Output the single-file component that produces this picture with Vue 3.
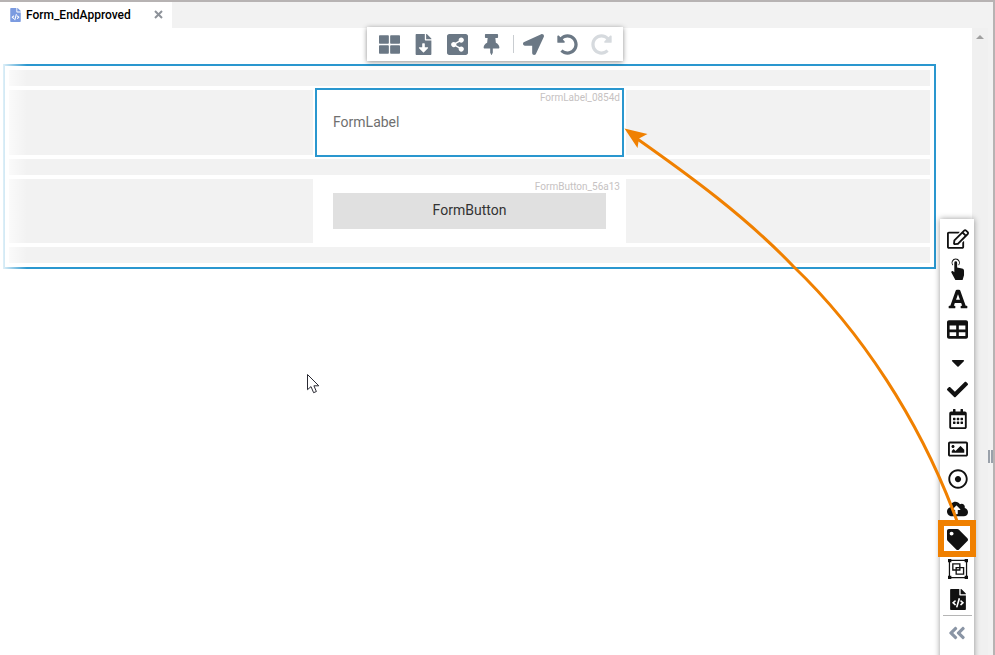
<script setup>
const toolbarIcons = [
  { id: 'layout', vb: '0 0 512 512', d: 'M296 32h192c13.255 0 24 10.745 24 24v160c0 13.255-10.745 24-24 24H296c-13.255 0-24-10.745-24-24V56c0-13.255 10.745-24 24-24zm-80 0H24C10.745 32 0 42.745 0 56v160c0 13.255 10.745 24 24 24h192c13.255 0 24-10.745 24-24V56c0-13.255-10.745-24-24-24zM0 296v160c0 13.255 10.745 24 24 24h192c13.255 0 24-10.745 24-24V296c0-13.255-10.745-24-24-24H24c-13.255 0-24 10.745-24 24zm296 184h192c13.255 0 24-10.745 24-24V296c0-13.255-10.745-24-24-24H296c-13.255 0-24 10.745-24 24v160c0 13.255 10.745 24 24 24z' },
  { id: 'download', vb: '0 0 384 512', d: 'M224 136V0H24C10.7 0 0 10.7 0 24v464c0 13.3 10.7 24 24 24h336c13.3 0 24-10.7 24-24V160H248c-13.2 0-24-10.8-24-24zm76.45 211.36l-96.42 95.7c-6.65 6.61-17.39 6.61-24.04 0l-96.42-95.7C73.42 337.29 80.54 320 94.82 320H160v-80c0-8.84 7.16-16 16-16h32c8.84 0 16 7.16 16 16v80h65.18c14.28 0 21.4 17.29 11.27 27.36zM377 105L279.1 7c-4.5-4.5-10.6-7-17-7H256v128h128v-6.1c0-6.3-2.5-12.4-7-16.9z' },
  { id: 'share', vb: '0 32 448 448', d: 'M448 80v352c0 26.51-21.49 48-48 48H48c-26.51 0-48-21.49-48-48V80c0-26.51 21.49-48 48-48h352c26.51 0 48 21.49 48 48zM304 296c-14.562 0-27.823 5.561-37.783 14.671l-67.958-40.775a56.339 56.339 0 0 0 0-27.793l67.958-40.775C276.177 210.439 289.438 216 304 216c30.928 0 56-25.072 56-56s-25.072-56-56-56-56 25.072-56 56c0 4.797.605 9.453 1.74 13.897l-67.958 40.775C171.823 205.561 158.562 200 144 200c-30.928 0-56 25.072-56 56s25.072 56 56 56c14.562 0 27.823-5.561 37.783-14.671l67.958 40.775a56.088 56.088 0 0 0-1.74 13.897c0 30.928 25.072 56 56 56s56-25.072 56-56C360 321.072 334.928 296 304 296z' },
  { id: 'pin', vb: '0 0 384 512', d: 'M298.028 214.267L285.793 96H328c13.255 0 24-10.745 24-24V24c0-13.255-10.745-24-24-24H56C42.745 0 32 10.745 32 24v48c0 13.255 10.745 24 24 24h42.207L85.972 214.267C37.465 236.82 0 277.261 0 328c0 13.255 10.745 24 24 24h136v104.007c0 1.242.289 2.467.845 3.578l24 48c2.941 5.882 11.364 5.893 14.311 0l24-48a8.008 8.008 0 0 0 .845-3.578V352h136c13.255 0 24-10.745 24-24-.001-51.183-37.983-91.42-85.973-113.733z' },
  { id: 'sep' },
  { id: 'locate', narrow: true, vb: '0 0 512 512', d: 'M444.52 3.52L28.74 195.42c-47.97 22.39-31.98 92.75 19.19 92.75h175.91v175.91c0 51.17 70.36 67.17 92.75 19.19l191.9-415.78c15.99-38.39-25.59-79.97-63.97-63.97z' },
  { id: 'undo', vb: '0 0 512 512', d: 'M255.545 8c-66.269.119-126.438 26.233-170.86 68.685L48.971 40.971C33.851 25.851 8 36.559 8 57.941V192c0 13.255 10.745 24 24 24h134.059c21.382 0 32.09-25.851 16.971-40.971l-41.75-41.75c30.864-28.899 70.801-44.907 113.23-45.273 92.398-.798 170.283 73.977 169.484 169.442C423.236 348.009 349.816 424 256 424c-41.127 0-79.997-14.678-110.63-41.556-4.743-4.161-11.906-3.908-16.368.553L89.34 422.659c-4.872 4.872-4.631 12.815.482 17.433C133.798 479.813 192.074 504 256 504c136.966 0 247.999-111.033 248-247.998C504.001 119.193 392.354 7.755 255.545 8z' },
  { id: 'redo', off: true, vb: '0 0 512 512', d: 'M256.455 8c66.269.119 126.437 26.233 170.859 68.685l35.715-35.715C478.149 25.851 504 36.559 504 57.941V192c0 13.255-10.745 24-24 24H345.941c-21.382 0-32.09-25.851-16.971-40.971l41.75-41.75c-30.864-28.899-70.801-44.907-113.23-45.273-92.398-.798-170.283 73.977-169.484 169.442C88.764 348.009 162.184 424 256 424c41.127 0 79.997-14.678 110.63-41.556 4.743-4.161 11.906-3.908 16.368.553l39.662 39.662c4.872 4.872 4.631 12.815-.482 17.433C378.202 479.813 319.926 504 256 504 119.034 504 8.001 392.967 8 256.002 7.999 119.193 119.646 7.755 256.455 8z' }
]

const fileCode = 'M384 121.941V128H256V0h6.059c6.365 0 12.47 2.529 16.971 7.029l97.941 97.941A24.005 24.005 0 0 1 384 121.941zM248 160c-13.2 0-24-10.8-24-24V0H24C10.745 0 0 10.745 0 24v464c0 13.255 10.745 24 24 24h336c13.255 0 24-10.745 24-24V160H248zM123.206 400.505a5.4 5.4 0 0 1-7.633.246l-64.866-60.812a5.4 5.4 0 0 1 0-7.879l64.866-60.812a5.4 5.4 0 0 1 7.633.246l19.579 20.885a5.4 5.4 0 0 1-.372 7.747L101.65 336l40.763 35.874a5.4 5.4 0 0 1 .372 7.747l-19.579 20.884zm51.295 50.479l-27.453-7.97a5.402 5.402 0 0 1-3.681-6.692l61.44-211.626a5.402 5.402 0 0 1 6.692-3.681l27.452 7.97a5.4 5.4 0 0 1 3.68 6.692l-61.44 211.626a5.397 5.397 0 0 1-6.69 3.681zm160.792-111.045l-64.866 60.812a5.4 5.4 0 0 1-7.633-.246l-19.58-20.885a5.4 5.4 0 0 1 .372-7.747L284.35 336l-40.763-35.874a5.4 5.4 0 0 1-.372-7.747l19.58-20.885a5.4 5.4 0 0 1 7.633-.246l64.866 60.812a5.4 5.4 0 0 1-.001 7.879z'

const paletteIcons = [
  { id: 'edit', w: 22, h: 20, vb: '0 0 576 512', d: 'M402.3 344.9l32-32c5-5 13.7-1.5 13.7 5.7V464c0 26.5-21.5 48-48 48H48c-26.5 0-48-21.5-48-48V112c0-26.5 21.5-48 48-48h273.5c7.1 0 10.7 8.6 5.7 13.7l-32 32c-1.5 1.5-3.5 2.3-5.7 2.3H48v352h352V350.5c0-2.1.8-4.1 2.3-5.6zm156.6-201.8L296.3 405.7l-90.4 10c-26.2 2.9-48.5-19.2-45.6-45.6l10-90.4L432.9 17.1c22.9-22.9 59.9-22.9 82.7 0l43.2 43.2c22.9 22.9 22.9 60 .1 82.8zM460.1 174L402 115.9 216.2 301.8l-7.3 65.3 65.3-7.3L460.1 174zm64.8-79.7l-43.2-43.2c-4.1-4.1-10.8-4.1-14.8 0L436 82l58.1 58.1 30.9-30.9c4-4.2 4-10.8-.1-14.9z' },
  { id: 'tap', w: 17, h: 23, vb: '0 0 24 32', d: 'M9.5 0.5a6 6 0 0 1 4.6 9.8l-1-1.1a4.5 4.5 0 1 0-7.2 0l-1 1.1A6 6 0 0 1 9.5 0.5zM7.5 6.5a2 2 0 0 1 4 0v6.5l6.8 1.5c2 .4 2.9 1.5 2.9 3.2V24l-2 7H9L3.5 20.5c-1-1.5.8-3.3 2.3-2.1l1.7 1.4z' },
  { id: 'font', w: 20, h: 20, vb: '0 16 448 480', d: 'M432 416h-23.41L277.88 53.69A32 32 0 0 0 247.58 32h-47.16a32 32 0 0 0-30.3 21.69L39.41 416H16a16 16 0 0 0-16 16v32a16 16 0 0 0 16 16h128a16 16 0 0 0 16-16v-32a16 16 0 0 0-16-16h-19.6l23.3-64h152.6l23.3 64H304a16 16 0 0 0-16 16v32a16 16 0 0 0 16 16h128a16 16 0 0 0 16-16v-32a16 16 0 0 0-16-16zM176.85 272L224 142.51 271.15 272z' },
  { id: 'table', w: 21, h: 21, vb: '0 0 512 512', d: 'M464 32H48C21.49 32 0 53.49 0 80v352c0 26.51 21.49 48 48 48h416c26.51 0 48-21.49 48-48V80c0-26.51-21.49-48-48-48zM224 416H64v-96h160v96zm0-160H64v-96h160v96zm224 160H288v-96h160v96zm0-160H288v-96h160v96z' },
  { id: 'caret', low: true, w: 14, h: 21, vb: '0 0 320 512', d: 'M31.3 192h257.3c17.8 0 26.7 21.5 14.1 34.1L174.1 354.8c-7.8 7.8-20.5 7.8-28.3 0L17.2 226.1C4.6 213.5 13.5 192 31.3 192z' },
  { id: 'check', w: 21, h: 21, vb: '0 0 512 512', d: 'M173.898 439.404l-166.4-166.4c-9.997-9.997-9.997-26.206 0-36.204l36.203-36.204c9.997-9.998 26.207-9.998 36.204 0L192 312.69 432.095 72.596c9.997-9.997 26.207-9.997 36.204 0l36.203 36.204c9.997 9.997 9.997 26.206 0 36.204l-294.4 294.401c-9.998 9.997-26.207 9.997-36.204-.001z' },
  { id: 'calendar', w: 18, h: 20, vb: '0 0 448 512', d: 'M148 288h-40c-6.6 0-12-5.4-12-12v-40c0-6.6 5.4-12 12-12h40c6.6 0 12 5.4 12 12v40c0 6.6-5.4 12-12 12zm108-12v-40c0-6.6-5.4-12-12-12h-40c-6.6 0-12 5.4-12 12v40c0 6.6 5.4 12 12 12h40c6.6 0 12-5.4 12-12zm96 0v-40c0-6.6-5.4-12-12-12h-40c-6.6 0-12 5.4-12 12v40c0 6.6 5.4 12 12 12h40c6.6 0 12-5.4 12-12zm-96 96v-40c0-6.6-5.4-12-12-12h-40c-6.6 0-12 5.4-12 12v40c0 6.6 5.4 12 12 12h40c6.6 0 12-5.4 12-12zm-96 0v-40c0-6.6-5.4-12-12-12h-40c-6.6 0-12 5.4-12 12v40c0 6.6 5.4 12 12 12h40c6.6 0 12-5.4 12-12zm192 0v-40c0-6.6-5.4-12-12-12h-40c-6.6 0-12 5.4-12 12v40c0 6.6 5.4 12 12 12h40c6.6 0 12-5.4 12-12zm96-260v352c0 26.5-21.5 48-48 48H48c-26.5 0-48-21.5-48-48V112c0-26.5 21.5-48 48-48h48V12c0-6.6 5.4-12 12-12h40c6.6 0 12 5.4 12 12v52h128V12c0-6.6 5.4-12 12-12h40c6.6 0 12 5.4 12 12v52h48c26.5 0 48 21.5 48 48zm-48 346V160H48v298c0 3.3 2.7 6 6 6h340c3.3 0 6-2.7 6-6z' },
  { id: 'image', w: 20, h: 20, vb: '0 0 512 512', d: 'M464 64H48C21.49 64 0 85.49 0 112v288c0 26.51 21.49 48 48 48h416c26.51 0 48-21.49 48-48V112c0-26.51-21.49-48-48-48zm-6 336H54a6 6 0 0 1-6-6V118a6 6 0 0 1 6-6h404a6 6 0 0 1 6 6v276a6 6 0 0 1-6 6zM128 152c-22.091 0-40 17.909-40 40s17.909 40 40 40 40-17.909 40-40-17.909-40-40-40zM96 352h320v-80l-87.515-87.515c-4.686-4.686-12.284-4.686-16.971 0L192 304l-39.515-39.515c-4.686-4.686-12.284-4.686-16.971 0L96 304v48z' },
  { id: 'radio', w: 20, h: 20, vb: '0 0 512 512', d: 'M256 56c110.532 0 200 89.451 200 200 0 110.532-89.451 200-200 200-110.532 0-200-89.451-200-200 0-110.532 89.451-200 200-200m0-48C119.033 8 8 119.033 8 256s111.033 248 248 248 248-111.033 248-248S392.967 8 256 8zm0 168c-44.183 0-80 35.817-80 80s35.817 80 80 80 80-35.817 80-80-35.817-80-80-80z' },
  { id: 'cloud', w: 21, h: 20, vb: '0 0 640 512', d: 'M537.6 226.6c4.1-10.7 6.4-22.4 6.4-34.6 0-53-43-96-96-96-19.7 0-38.1 6-53.3 16.2C367 64.2 315.3 32 256 32c-88.4 0-160 71.6-160 160 0 2.7.1 5.4.2 8.1C40.2 219.8 0 273.2 0 336c0 79.5 64.5 144 144 144h368c70.7 0 128-57.3 128-128 0-61.9-44-113.6-102.4-125.4zM393.4 288H328v112c0 8.8-7.2 16-16 16h-48c-8.8 0-16-7.2-16-16V288h-65.4c-14.3 0-21.4-17.2-11.3-27.3l105.4-105.4c6.2-6.2 16.4-6.2 22.6 0l105.4 105.4c10.1 10.1 3 27.3-11.3 27.3z' },
  { id: 'tag', marked: true, w: 21, h: 21, vb: '0 0 512 512', d: 'M0 252.118V48C0 21.49 21.49 0 48 0h204.118a48 48 0 0 1 33.941 14.059l211.882 211.882c18.745 18.745 18.745 49.137 0 67.882L293.823 497.941c-18.745 18.745-49.137 18.745-67.882 0L14.059 286.059A48 48 0 0 1 0 252.118zM112 64c-26.51 0-48 21.49-48 48s21.49 48 48 48 48-21.49 48-48-21.49-48-48-48z' },
  { id: 'frame', w: 20, h: 20, vb: '0 0 24 24', d: 'M0 0h4v1h16V0h4v4h-1v16h1v4h-4v-1H4v1H0v-4h1V4H0zM2.5 4v16H4v1.5h16V20h1.5V4H20V2.5H4V4zM5 5h10v9H5zM6.6 6.6v5.8h6.8V6.6zM9 9.5h10.5v9.5H9zM10.6 11.1v6.3h7.3v-6.3z' },
  { id: 'filecode', w: 16, h: 21, vb: '0 0 384 512', d: fileCode }
]

const chevrons = 'M223.7 239l136-136c9.4-9.4 24.6-9.4 33.9 0l22.6 22.6c9.4 9.4 9.4 24.6 0 33.9L319.9 256l96.4 96.4c9.4 9.4 9.4 24.6 0 33.9L393.7 409c-9.4 9.4-24.6 9.4-33.9 0l-136-136c-9.5-9.4-9.5-24.6-.1-34zm-192 34l136 136c9.4 9.4 24.6 9.4 33.9 0l22.6-22.6c9.4-9.4 9.4-24.6 0-33.9L127.9 256l96.4-96.4c9.4-9.4 9.4-24.6 0-33.9L201.7 103c-9.4-9.4-24.6-9.4-33.9 0l-136 136c-9.5 9.4-9.5 24.6-.1 34z'
</script>

<template>
  <div class="app">
    <header class="tabbar">
      <div class="tab">
        <svg class="tab-icon" viewBox="0 0 384 512"><path :d="fileCode" /></svg>
        <span class="tab-title">Form_EndApproved</span>
        <svg class="tab-close" viewBox="0 0 9 9" width="9" height="9"><path d="M1 1L8 8M8 1L1 8" /></svg>
      </div>
    </header>

    <div class="body">
      <main class="canvas">
        <section class="form">
          <div class="band"></div>
          <div class="row">
            <div class="filler"></div>
            <div class="cell selected">
              <span class="caption">FormLabel_0854d</span>
              <span class="label">FormLabel</span>
            </div>
            <div class="filler"></div>
          </div>
          <div class="band"></div>
          <div class="row">
            <div class="filler"></div>
            <div class="cell">
              <span class="caption">FormButton_56a13</span>
              <div class="button">FormButton</div>
            </div>
            <div class="filler"></div>
          </div>
          <div class="band"></div>
          <div class="fade"></div>
        </section>
      </main>
      <div class="scrollbar"><span class="scroll-up"></span></div>
      <div class="splitter"><span class="grip"></span></div>
    </div>

    <nav class="toolbar">
      <template v-for="icon in toolbarIcons" :key="icon.id">
        <span v-if="icon.id === 'sep'" class="tool-sep"></span>
        <span v-else class="tool" :class="{ narrow: icon.narrow, off: icon.off }">
          <svg :viewBox="icon.vb" class="tool-svg"><path :d="icon.d" /></svg>
        </span>
      </template>
    </nav>

    <aside class="palette">
      <div
        v-for="icon in paletteIcons"
        :key="icon.id"
        class="pal-row"
        :class="{ low: icon.low }"
      >
        <svg :viewBox="icon.vb" :width="icon.w" :height="icon.h"><path :d="icon.d" /></svg>
        <span v-if="icon.marked" class="mark"></span>
      </div>
      <div class="pal-sep"></div>
      <div class="pal-collapse">
        <svg viewBox="0 0 448 512" width="18" height="20"><path :d="chevrons" /></svg>
      </div>
    </aside>

    <svg class="callout" viewBox="0 0 995 655" width="995" height="655">
      <path class="callout-line" d="M957 521C920 420 860 330 793 266C745 216 690 176 636 138" />
      <path class="callout-head" d="M624.5 128.5L647.5 134L639 138.5L637.5 148Z" />
    </svg>

    <svg class="pointer" viewBox="0 0 13 20" width="13" height="20">
      <path d="M.5.5V15.7L4 12.6 6.6 18.7 9.4 17.5 6.9 11.8H11.8Z" />
    </svg>
  </div>
</template>

<style scoped>
.app {
  position: relative;
  width: 995px;
  height: 655px;
  display: flex;
  flex-direction: column;
  overflow: hidden;
  box-sizing: border-box;
  border-top: 2px solid #b7b3b3;
  border-right: 2px solid #b7b3b3;
  background: #f2f2f2;
  font-family: Roboto, "Liberation Sans", sans-serif;
}
.tabbar {
  height: 26px;
  flex: none;
  display: flex;
}
.tab {
  width: 172px;
  background: #fff;
  display: flex;
  align-items: center;
  padding-left: 10px;
  box-sizing: border-box;
}
.tab-icon {
  width: 11px;
  height: 14px;
  fill: #7b9be0;
  flex: none;
}
.tab-title {
  margin-left: 5px;
  font-size: 12px;
  font-weight: 500;
  color: #000;
  width: 128px;
}
.tab-close {
  flex: none;
  margin-top: -2px;
}
.tab-close path {
  fill: none;
  stroke: #8d9299;
  stroke-width: 2;
}
.body {
  flex: 1;
  display: flex;
  min-height: 0;
}
.canvas {
  width: 972px;
  flex: none;
  background: #fff;
  padding: 36px 0 0 3px;
  box-sizing: border-box;
}
.form {
  position: relative;
  width: 933px;
  height: 205px;
  box-sizing: border-box;
  border: 2px solid #2a97cf;
  padding: 4px;
  display: flex;
  flex-direction: column;
  gap: 4px;
  background: #fff;
}
.band {
  height: 16px;
  background: #f2f2f2;
  flex: none;
}
.row {
  height: 65px;
  flex: none;
  display: grid;
  grid-template-columns: 304px 1fr 304px;
}
.row:nth-child(4) {
  height: 64px;
}
.filler {
  background: #f2f2f2;
}
.cell {
  position: relative;
  background: #fff;
  display: flex;
  flex-direction: column;
}
.selected {
  margin: -2px 2px;
  border: 2px solid #2a97cf;
  justify-content: center;
  padding-left: 16px;
}
.caption {
  position: absolute;
  top: 1px;
  right: 6px;
  font-size: 10px;
  line-height: 14px;
  color: #c6c2c2;
}
.selected .caption {
  top: 1px;
  right: 2px;
}
.label {
  font-size: 14px;
  line-height: 16px;
  padding-bottom: 2px;
  color: #6f6f6f;
}
.button {
  margin: 14px 20px 0;
  height: 36px;
  padding-bottom: 2px;
  box-sizing: border-box;
  background: #e0e0e0;
  color: #333;
  font-size: 14px;
  display: flex;
  align-items: center;
  justify-content: center;
}
.fade {
  position: absolute;
  left: -2px;
  top: -2px;
  bottom: -2px;
  width: 24px;
  background: linear-gradient(to right, rgba(255, 255, 255, 0.85), rgba(255, 255, 255, 0));
}
.scrollbar {
  width: 16px;
  flex: none;
  background: #f0f0f0;
  display: flex;
  justify-content: center;
  padding-top: 7px;
  box-sizing: border-box;
}
.scroll-up {
  width: 0;
  height: 0;
  border-left: 4px solid transparent;
  border-right: 4px solid transparent;
  border-bottom: 4px solid #a0a0a0;
}
.splitter {
  position: relative;
  flex: 1;
  background: #f2f2f2;
}
.grip {
  position: absolute;
  left: 0;
  top: 422px;
  width: 5px;
  height: 13px;
  box-sizing: border-box;
  border-left: 2px solid #9aa1aa;
  border-right: 2px solid #9aa1aa;
}
.toolbar {
  position: absolute;
  left: 367px;
  top: 25px;
  width: 256px;
  height: 34px;
  box-sizing: border-box;
  padding-left: 5px;
  display: flex;
  align-items: center;
  background: #fff;
  box-shadow: 0 1px 5px rgba(0, 0, 0, 0.45);
}
.tool {
  width: 34px;
  height: 34px;
  flex: none;
  display: flex;
  align-items: center;
  justify-content: center;
  fill: #6b7885;
}
.tool.narrow {
  width: 33px;
}
.tool.off {
  fill: #d6dade;
}
.tool-svg {
  height: 21px;
  width: 21px;
}
.tool-sep {
  width: 1px;
  height: 18px;
  margin: 0 3px 0 5px;
  background: #c9cdd1;
  flex: none;
}
.palette {
  position: absolute;
  left: 940px;
  top: 217px;
  width: 34px;
  height: 450px;
  padding-top: 5px;
  box-sizing: border-box;
  background: #fff;
  box-shadow: 0 0 6px rgba(0, 0, 0, 0.4);
  display: flex;
  flex-direction: column;
  align-items: center;
}
.pal-row {
  position: relative;
  width: 100%;
  height: 30px;
  flex: none;
  box-sizing: border-box;
  padding-left: 1px;
  display: flex;
  align-items: center;
  justify-content: center;
  fill: #111;
}
.pal-row.low {
  padding-top: 6px;
}
.mark {
  position: absolute;
  left: -2px;
  right: -2px;
  top: -4px;
  bottom: -3px;
  border: 6px solid #f08000;
}
.pal-sep {
  width: 29px;
  height: 1px;
  margin-top: 1px;
  background: #b5b5b5;
  flex: none;
}
.pal-collapse {
  margin-top: 7px;
  height: 20px;
  display: flex;
  fill: #8a95a5;
}
.callout {
  position: absolute;
  left: 0;
  top: -2px;
  pointer-events: none;
}
.callout-line {
  fill: none;
  stroke: #f08000;
  stroke-width: 3;
}
.callout-head {
  fill: #f08000;
}
.pointer {
  position: absolute;
  left: 307px;
  top: 372px;
  pointer-events: none;
}
.pointer path {
  fill: #fff;
  stroke: #2a2a33;
  stroke-width: 1;
}
</style>

<style>
html,
body {
  margin: 0;
  background: #fff;
  overflow: hidden;
}
</style>
